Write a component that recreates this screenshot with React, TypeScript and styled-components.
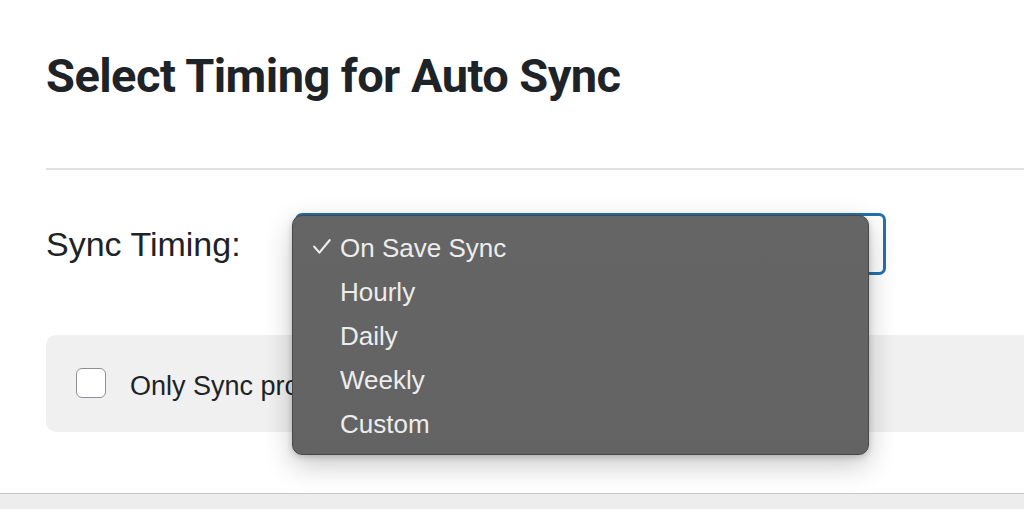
import { useState } from "react";
import { styled, createGlobalStyle } from "styled-components";

const GlobalStyle = createGlobalStyle`
  html, body {
    margin: 0;
    padding: 0;
    background: #ededed;
    font-family: "Liberation Sans", Arial, sans-serif;
  }
`;

const OPTIONS = ["On Save Sync", "Hourly", "Daily", "Weekly", "Custom"];

function CheckMark() {
  return (
    <svg width="18" height="15" viewBox="0 0 18 15" fill="none">
      <path d="M1.2 7.6 L6.4 13.6 L16.6 1.2" stroke="#ededed" strokeWidth="2.2" strokeLinecap="round" strokeLinejoin="round" />
    </svg>
  );
}

function App() {
  const [value, setValue] = useState("On Save Sync");
  const [open, setOpen] = useState(true); // dropdown shown open as in the shot
  const [onlyChanged, setOnlyChanged] = useState(false);

  return (
    <>
      <GlobalStyle />
      <Card>
        <Title>Select Timing for Auto Sync</Title>
        <Divider />
        <FieldRow>
          <FieldLabel>Sync Timing:</FieldLabel>
          <SelectWrap>
            <SelectBox onClick={() => setOpen(!open)}>{value}</SelectBox>
            {open && (
              <Menu>
                {OPTIONS.map((opt) => (
                  <MenuItem
                    key={opt}
                    onClick={() => {
                      setValue(opt);
                      setOpen(false);
                    }}
                  >
                    <CheckCell>{opt === value && <CheckMark />}</CheckCell>
                    {opt}
                  </MenuItem>
                ))}
              </Menu>
            )}
          </SelectWrap>
        </FieldRow>
        <OptionPanel>
          <CheckBox $checked={onlyChanged} onClick={() => setOnlyChanged(!onlyChanged)} />
          <OptionLabel>Only Sync products</OptionLabel>
        </OptionPanel>
      </Card>
    </>
  );
}

export default App;

const Card = styled.section`
  background: #ffffff;
  height: 494px;
  box-sizing: border-box;
  padding: 48px 0 0 46px;
  border-bottom: 1px solid #c6c6c6;
  box-shadow: 0 1px 2px rgba(0, 0, 0, 0.06);
  overflow: hidden;
  display: flex;
  flex-direction: column;
`;

const Title = styled.h2`
  margin: 0;
  font-family: Roboto, "Liberation Sans", sans-serif;
  font-weight: 700;
  font-size: 47px;
  line-height: 56px;
  letter-spacing: -0.55px;
  color: #1d2327;
`;

const Divider = styled.hr`
  margin: 64px 0 0 0;
  border: 0;
  height: 2px;
  background: #e1e1e1;
`;

const FieldRow = styled.div`
  margin-top: 44px;
  display: flex;
  align-items: center;
  height: 60px;
`;

const FieldLabel = styled.label`
  width: 250px;
  font-size: 34px;
  color: #1d2327;
`;

const SelectWrap = styled.div`
  position: relative;
`;

const SelectBox = styled.div`
  width: 589px;
  height: 60px;
  box-sizing: border-box;
  padding: 0 20px;
  display: flex;
  align-items: center;
  font-size: 26px;
  color: #2c3338;
  background: #ffffff;
  border: 2px solid #2271b1;
  box-shadow: 0 0 0 1px #2271b1;
  border-radius: 6px;
  cursor: pointer;
`;

const Menu = styled.ul`
  position: absolute;
  top: 1px;
  left: -4px;
  width: 577px;
  height: 240px;
  box-sizing: border-box;
  margin: 0;
  padding: 10px 0 0 20px;
  list-style: none;
  background: linear-gradient(180deg, #656565 0%, #636363 100%);
  border: 1px solid #474747;
  border-radius: 10px;
  box-shadow: 0 10px 28px rgba(0, 0, 0, 0.22), 0 2px 6px rgba(0, 0, 0, 0.18);
  z-index: 10;
`;

const MenuItem = styled.li`
  display: flex;
  align-items: center;
  height: 44px;
  font-size: 26px;
  color: #ededed;
  cursor: default;
`;

const CheckCell = styled.span`
  width: 27px;
  display: flex;
  align-items: center;
  padding-bottom: 4px;
`;

const OptionPanel = styled.div`
  margin-top: 61px;
  margin-right: -14px;
  height: 97px;
  box-sizing: border-box;
  padding-left: 30px;
  display: flex;
  align-items: center;
  gap: 24px;
  background: #f0f0f0;
  border-radius: 10px;
`;

const CheckBox = styled.span<{ $checked: boolean }>`
  width: 30px;
  height: 30px;
  box-sizing: border-box;
  border: 1.5px solid #8c8f94;
  border-radius: 6px;
  background: ${(p) => (p.$checked ? "#2271b1" : "#ffffff")};
  cursor: pointer;
  margin-top: -1px;
`;

const OptionLabel = styled.span`
  font-size: 27px;
  color: #1d2327;
  padding-top: 6px;
`;
